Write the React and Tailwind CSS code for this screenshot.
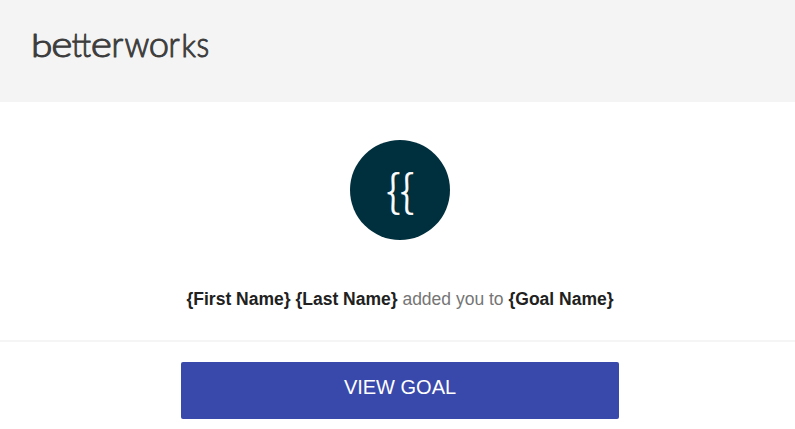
import React from "react";

// Wide geometric wordmark: each part gets its own origin, size and stretch
const PARTS = [
  { text: "b", x: -1, size: 32, stretch: 1.22 },
  { text: "e", x: 19.2, size: 35, stretch: 1.16 },
  { text: "tt", x: 39.8, size: 34, stretch: 0.86 },
  { text: "e", x: 58.8, size: 35, stretch: 1.16 },
  { text: "r", x: 79.4, size: 35, stretch: 0.95 },
  { text: "w", x: 92.4, size: 34.5, stretch: 0.94 },
  { text: "o", x: 116.8, size: 35, stretch: 1.04 },
  { text: "r", x: 136.4, size: 35, stretch: 0.9 },
  { text: "k", x: 149.4, size: 32, stretch: 0.95 },
  { text: "s", x: 164.6, size: 35, stretch: 0.85 },
];

function Logo() {
  return (
    <svg
      width="180"
      height="32"
      viewBox="0 0 180 32"
      className="block overflow-visible fill-[#3c3c3c] stroke-[#3c3c3c] font-['Lato',sans-serif] font-light"
      strokeWidth="1"
      strokeLinejoin="round"
      role="img"
      aria-label="betterworks"
    >
      {PARTS.map(({ text, x, size, stretch }, i) => (
        <text
          key={i}
          fontSize={size}
          transform={`translate(${x} 27.5) scale(${stretch} 1)`}
        >
          {text}
        </text>
      ))}
    </svg>
  );
}

function Avatar({ initials }) {
  return (
    <div className="flex h-[100px] w-[100px] items-center justify-center rounded-full bg-[#002f3d]">
      <span className="pb-1 font-['Noto_Sans_CJK_JP',sans-serif] text-[44px] leading-none font-light text-white [-webkit-text-stroke:0.6px_white]">
        {initials}
      </span>
    </div>
  );
}

function App() {
  return (
    <div className="h-[429px] w-full overflow-hidden bg-white font-['Liberation_Sans',Arial,sans-serif]">
      <div className="w-[800px]">
        <header className="h-[102px] bg-[#f4f4f4] pt-[29px] pl-8">
          <Logo />
        </header>

        <main className="flex flex-col items-center border-b-2 border-[#f5f5f5] pt-[38px] pb-[27px]">
          <Avatar initials="{{" />
          <p className="mt-[46px] text-[17.5px] leading-[27px] text-[#757575]">
            <strong className="text-[#212121]">{"{First Name} {Last Name}"}</strong>
            {" added you to "}
            <strong className="text-[#212121]">{"{Goal Name}"}</strong>
          </p>
        </main>

        <div className="flex justify-center pt-5">
          <a
            href="#goal"
            className="block h-[57px] w-[438px] rounded-xs bg-[#3949ab] pt-[10px] text-center text-[20px] leading-[30px] text-white"
          >
            VIEW GOAL
          </a>
        </div>
      </div>
    </div>
  );
}

export default App;
